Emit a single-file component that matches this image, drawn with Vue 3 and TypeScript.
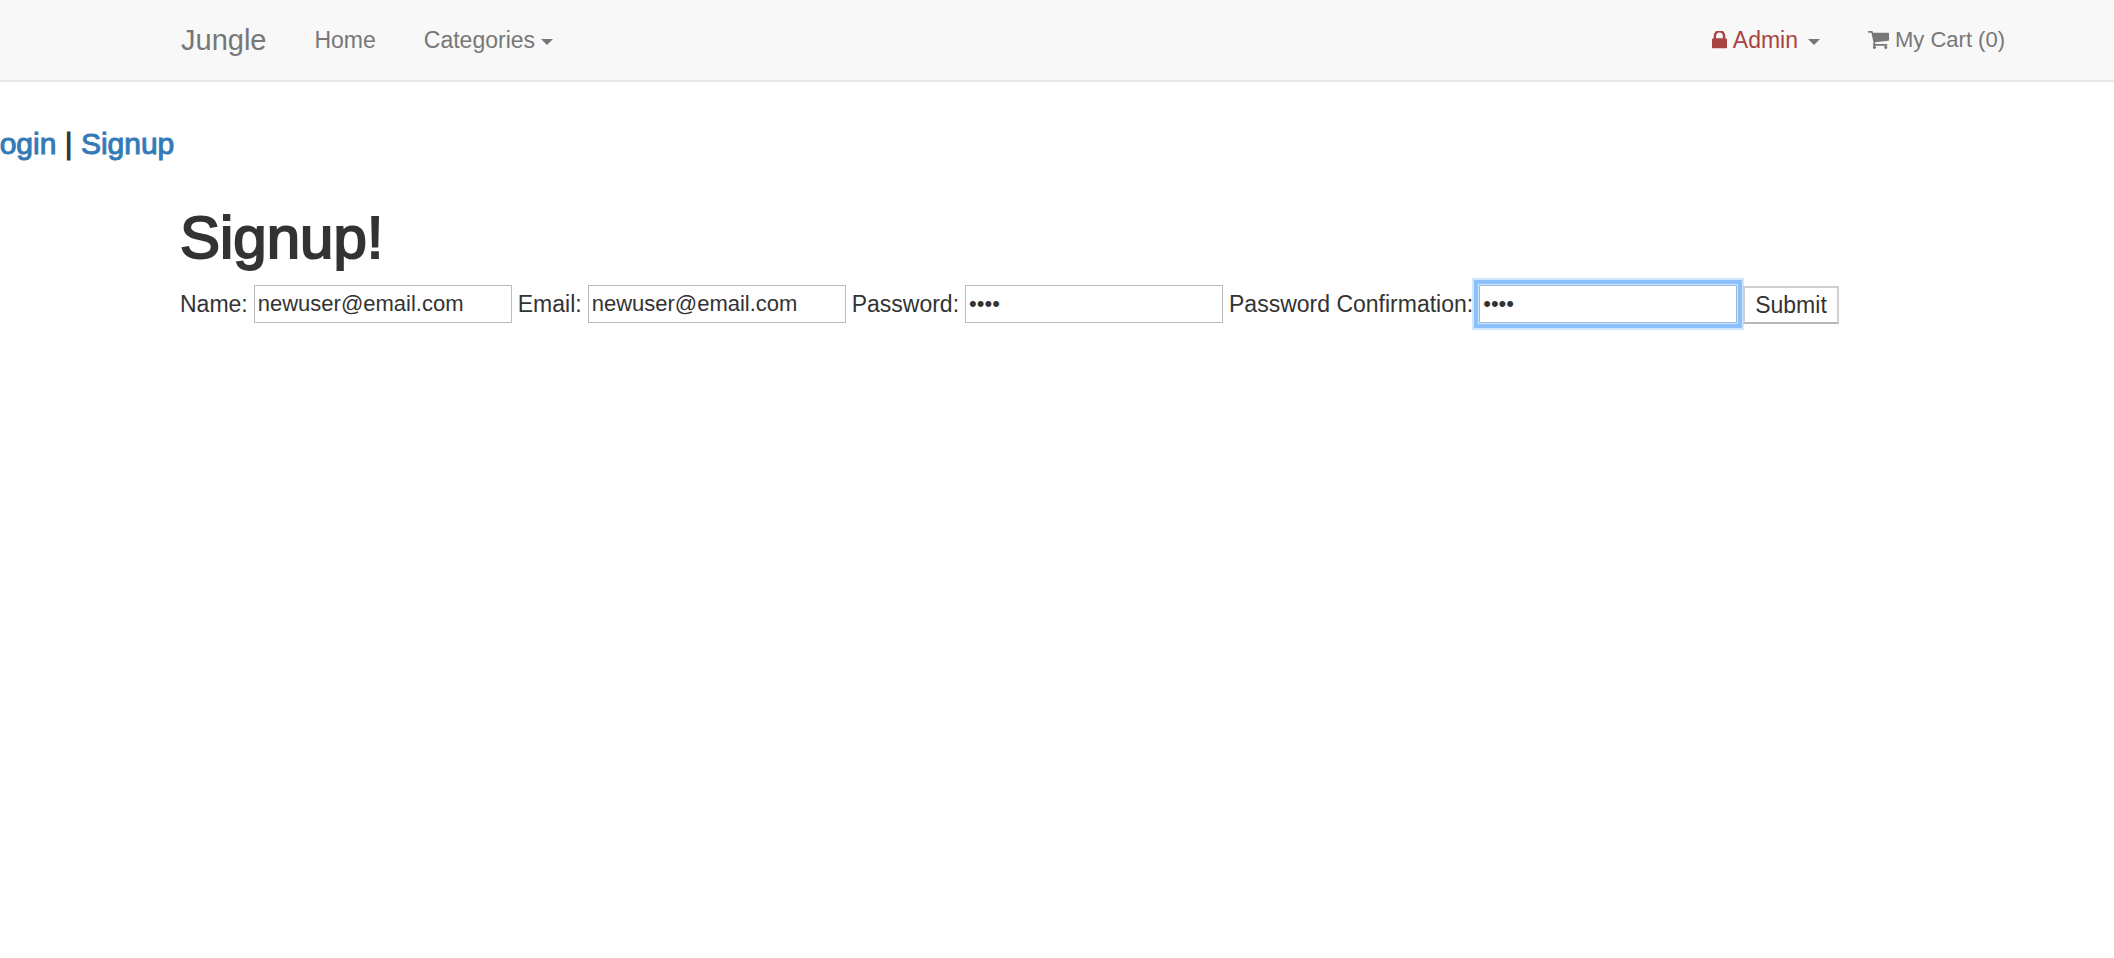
<script setup lang="ts">
import { ref } from 'vue'

interface Field {
  id: string
  label: string
  type: string
  value: string
  active: boolean
}

const fields = ref<Field[]>([
  { id: 'name', label: 'Name:', type: 'text', value: 'newuser@email.com', active: false },
  { id: 'email', label: 'Email:', type: 'text', value: 'newuser@email.com', active: false },
  { id: 'password', label: 'Password:', type: 'password', value: 'pass', active: false },
  { id: 'confirmation', label: 'Password Confirmation:', type: 'password', value: 'pass', active: true },
])
</script>

<template>
  <div class="page">
    <header class="navbar">
      <a class="brand" href="#">Jungle</a>
      <nav class="links">
        <a class="link" href="#">Home</a>
        <a class="link" href="#">Categories <span class="caret"></span></a>
      </nav>
      <nav class="links links-right">
        <a class="link" href="#">
          <span class="admin">
            <svg class="lock" viewBox="320 256 1152 1280" aria-hidden="true">
              <path d="M640 768h512v-192q0-106-75-181t-181-75-181 75-75 181v192zm832 96v576q0 40-28 68t-68 28h-960q-40 0-68-28t-28-68v-576q0-40 28-68t68-28h32v-192q0-184 132-316t316-132 316 132 132 316v192h32q40 0 68 28t28 68z" />
            </svg>
            Admin
          </span>
          <span class="caret"></span>
        </a>
        <a class="link" href="#">
          <svg class="cart" viewBox="64 256 1664 1408" aria-hidden="true">
            <path d="M704 1536q0 52-38 90t-90 38-90-38-38-90 38-90 90-38 90 38 38 90zm896 0q0 52-38 90t-90 38-90-38-38-90 38-90 90-38 90 38 38 90zm128-1088v512q0 24-16.5 42.5t-40.5 21.5l-1044 122q13 60 13 70 0 16-24 64h920q26 0 45 19t19 45-19 45-45 19h-1024q-26 0-45-19t-19-45q0-11 8-31.5t16-36 21.5-40 15.5-29.5l-177-823h-204q-26 0-45-19t-19-45 19-45 45-19h256q16 0 28.5 6.5t19.5 15.5 13 24.5 8 26 5.5 29.5 4.5 26h1201q26 0 45 19t19 45z" />
          </svg>
          My Cart (0)
        </a>
      </nav>
    </header>

    <h4 class="account"><a href="#">Login</a> | <a href="#">Signup</a></h4>

    <main class="content">
      <h1 class="title">Signup!</h1>
      <form class="form" @submit.prevent>
        <template v-for="field in fields" :key="field.id">
          <label :for="field.id">{{ field.label }}</label>
          <input
            :id="field.id"
            v-model="field.value"
            class="input"
            :class="{ active: field.active }"
            :type="field.type"
          />
        </template>
        <button class="submit" type="submit">Submit</button>
      </form>
    </main>
  </div>
</template>

<style>
body {
  margin: 0;
  background: #fff;
}
</style>

<style scoped>
.page {
  box-sizing: border-box;
  min-height: 100vh;
  padding-bottom: 32px;
  color: #333;
  font-family: "Liberation Sans", Arial, sans-serif;
  font-size: 23px;
  line-height: 32px;
}

.navbar {
  display: flex;
  align-items: center;
  height: 80px;
  padding: 0 85px 0 181px;
  background: #f8f8f8;
  border-bottom: 2px solid #e7e7e7;
}

.brand {
  margin-right: 24px;
  color: #777;
  font-size: 29px;
  text-decoration: none;
}

.links {
  display: flex;
}

.links-right {
  margin-left: auto;
  font-size: 22px;
}

.link {
  display: flex;
  align-items: center;
  gap: 6px;
  padding: 0 24px;
  color: #777;
  text-decoration: none;
}

.admin {
  display: flex;
  align-items: center;
  gap: 6px;
  margin-right: 4px;
  color: #a94442;
  font-size: 23px;
}

.caret {
  margin-top: 4px;
  border-top: 6px solid #777;
  border-right: 6px solid transparent;
  border-left: 6px solid transparent;
}

.lock {
  width: 15px;
  height: 18px;
  fill: currentColor;
}

.cart {
  width: 21px;
  height: 18px;
  fill: currentColor;
}

.account {
  margin: 46px 0 0 -17px;
  font-size: 30px;
  font-weight: 400;
  line-height: 32px;
  -webkit-text-stroke: 1px;
}

.account a {
  color: #337ab7;
  text-decoration: none;
}

.content {
  padding: 0 180px;
}

.title {
  margin: 46px 0 14px;
  font-size: 60px;
  font-weight: 400;
  line-height: 64px;
  -webkit-text-stroke: 2px;
}

.form {
  display: flex;
  flex-wrap: wrap;
  align-items: center;
  gap: 6px;
}

.input {
  box-sizing: border-box;
  width: 258px;
  height: 38px;
  padding: 0 3px;
  color: #333;
  font: inherit;
  font-size: 22px;
  background: #fff;
  border: 1px solid #bbb;
  border-radius: 0;
  outline: none;
}

.input.active {
  border-color: #9db9d3;
  box-shadow: 0 0 0 1px #d0e5fb, 0 0 0 5px #8ac1fd, 0 0 0 7px #d0e6fe;
}

.submit {
  height: 38px;
  margin-top: 2px;
  padding: 0 10px;
  color: #333;
  font: inherit;
  background: #fff;
  border: 2px solid #d0d0d0;
  border-bottom-color: #b8b8b8;
  border-radius: 0;
}
</style>
